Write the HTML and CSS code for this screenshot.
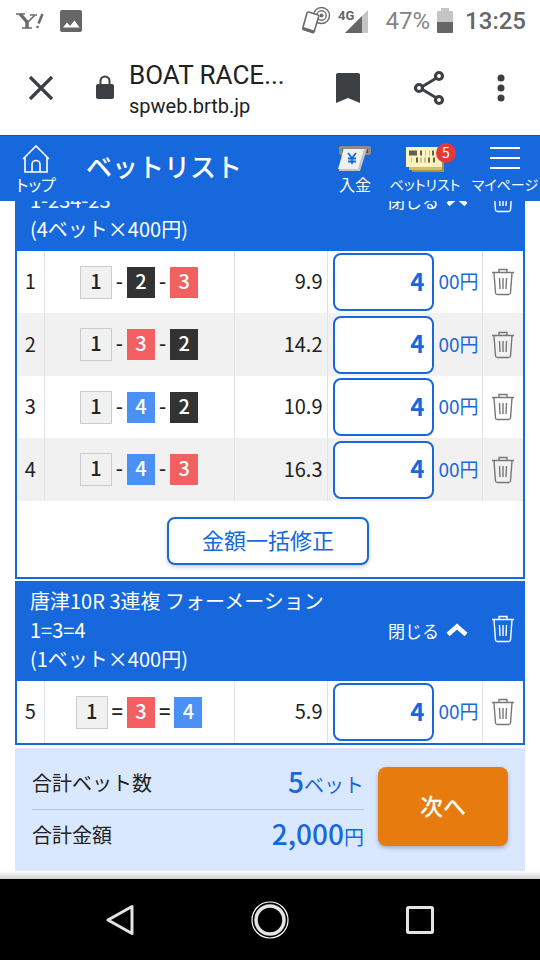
FILE: index.html
```html
<!DOCTYPE html>
<html lang="ja">
<head>
    <meta charset="utf-8">
    <meta name="viewport" content="width=device-width, initial-scale=1">
    <title>ベットリスト</title>
    <link rel="stylesheet" href="styles.css">
</head>
<body>
    <!-- shared icons -->
    <svg class="defs" width="0" height="0">
        <symbol id="trash" viewBox="0 0 24 28">
            <path d="M1 4.500H23M8 4V1.500H16V4M3 5L4.500 25Q4.700 26.500 6.500 26.500H17.500Q19.300 26.500 19.500 25L21 5M8.500 10L9 21M12 10V21M15.500 10L15 21" fill="none" stroke="currentColor" stroke-width="1.400"/>
        </symbol>
        <symbol id="chevron" viewBox="0 0 22 14">
            <path d="M2 11.500l9-8 9 8" fill="none" stroke="currentColor" stroke-width="4.500"/>
        </symbol>
    </svg>

    <div class="status-bar">
        <svg width="30" height="20" viewBox="0 0 30 20" fill="none" stroke="#6b6b6b">
            <path d="M0 3h9M14 4h7M6 17h10" stroke-width="1.500"/>
            <path d="M4 3l7 8v6" stroke-width="3.400"/>
            <path d="M18.500 4.500l-7 7" stroke-width="1.600"/>
            <path d="M26.500 3l-4 9.500" stroke-width="2.600"/>
            <circle cx="21.500" cy="16" r="1.300" fill="#6b6b6b" stroke="none"/>
        </svg>
        <svg class="photo-icon" width="22" height="22" viewBox="0 0 22 22">
            <rect width="22" height="22" rx="2" fill="#666"/>
            <path d="M3 17.500l4-5 3 3.500 4.500-5.500 5 7z" fill="#fff"/>
        </svg>
        <svg class="nfc-icon" width="30" height="30" viewBox="0 0 30 30" fill="none" stroke="#6b6b6b">
            <circle cx="20.500" cy="9.500" r="2" fill="#6b6b6b" stroke="none"/>
            <circle cx="20.500" cy="9.500" r="4.700" stroke-width="1.400"/>
            <circle cx="20.500" cy="9.500" r="8" stroke-width="1.400"/>
            <path d="M7.500 6l9.500 3q1 .4.700 1.500l-4.500 15q-.4 1.200-1.500 1L2.500 23.500q-1-.4-.700-1.500L6 7q.4-1.200 1.500-1z" fill="#fff" stroke-width="1.600"/>
            <path d="M2 22.500l11 3.500" stroke-width="3"/>
        </svg>
        <svg class="signal-icon" width="31" height="26" viewBox="0 0 31 26">
            <path d="M30 2v23H7z" fill="#c4c4c4"/>
            <path d="M24 8v17H7z" fill="#666"/>
            <text x="0" y="12">4G</text>
        </svg>
        <span class="battery">47%</span>
        <svg width="16" height="26" viewBox="0 0 16 26">
            <path d="M4 0h8v3h3q1 0 1 1v10H0V4q0-1 1-1h3z" fill="#c4c4c4"/>
            <path d="M0 14h16v10q0 1-1 1H1q-1 0-1-1z" fill="#666"/>
        </svg>
        <span class="clock">13:25</span>
    </div>

    <div class="browser-bar">
        <button class="icon-button close-tab" aria-label="閉じる">
            <svg width="26" height="26" viewBox="0 0 26 26"><path d="M2 2l22 22M24 2L2 24" stroke="currentColor" stroke-width="3.200"/></svg>
        </button>
        <svg class="lock" width="20" height="26" viewBox="0 0 20 26">
            <rect x="1" y="9" width="18" height="15" rx="2" fill="currentColor"/>
            <path d="M5.500 10V6a4.500 4.500 0 0 1 9 0v4" fill="none" stroke="currentColor" stroke-width="2"/>
        </svg>
        <div class="page-info">
            <div class="page-title">BOAT RACE...</div>
            <div class="page-url">spweb.brtb.jp</div>
        </div>
        <button class="icon-button" aria-label="ブックマーク">
            <svg width="26" height="32" viewBox="0 0 26 32"><path d="M1 31V3q0-2 2-2h20q2 0 2 2v28l-12-5z" fill="currentColor"/></svg>
        </button>
        <button class="icon-button share" aria-label="共有">
            <svg width="32" height="36" viewBox="0 0 32 36" fill="none" stroke="currentColor" stroke-width="3.200">
                <path d="M7 18L26 6.500M7 18l19 11.500" stroke-width="2.800"/>
                <g fill="#fff"><circle cx="6" cy="18" r="3.500"/><circle cx="26" cy="6" r="3.500"/><circle cx="26" cy="30" r="3.500"/></g>
            </svg>
        </button>
        <button class="icon-button" aria-label="メニュー">
            <svg width="8" height="28" viewBox="0 0 8 28" fill="currentColor"><circle cx="4" cy="4" r="3.500"/><circle cx="4" cy="14" r="3.500"/><circle cx="4" cy="24" r="3.500"/></svg>
        </button>
    </div>

    <header class="site-header">
        <a href="#" class="header-link home">
            <svg width="28" height="28" viewBox="0 0 28 28" fill="none" stroke="#fff" stroke-width="1.600">
                <path d="M1 14L14 1l13 13M3 12.500V27h22V12.500M10 27v-7.500a4 4 0 0 1 8 0V27"/>
            </svg>
            <span>トップ</span>
        </a>
        <h1>ベットリスト</h1>
        <a href="#" class="header-link deposit">
            <svg width="34" height="28" viewBox="0 0 34 28">
                <rect x="1" y="1" width="32" height="9" rx="2" fill="#8c8c8c"/>
                <rect x="4" y="4" width="26" height="4" fill="#555"/>
                <path d="M5 4h24l-7 22H1z" fill="#c4c4c4"/>
                <path d="M6 4h20l-6 20H0z" fill="#f0f0f0"/>
                <path d="M10 8l4 5 4-5M14 13v6M10 13.500h8M10 16.500h8" stroke="#1768dc" stroke-width="1.800" fill="none"/>
            </svg>
            <span>入金</span>
        </a>
        <a href="#" class="header-link betlist">
            <span class="ticket">
                <svg width="38" height="26" viewBox="0 0 38 26">
                    <rect x="6" y="6" width="32" height="19" fill="#ad9443"/>
                    <rect x="3" y="3" width="33" height="20" fill="#d5bd68"/>
                    <rect width="36" height="20" fill="#fdf3bd"/>
                    <path d="M3 6h8M14 6h2M26 6h2M10 13h2M22 13h2M27 13h2" stroke="#665f50" stroke-width="5"/>
                    <path d="M19 6h1M23 6h1M5 13h1M14 13h2M18 13h2" stroke="#c9bf91" stroke-width="5"/>
                </svg>
                <span class="badge">5</span>
            </span>
            <span>ベットリスト</span>
        </a>
        <a href="#" class="header-link mypage">
            <svg width="32" height="24" viewBox="0 0 32 24"><path d="M1 2h30M1 12h30M1 22h30" stroke="#fff" stroke-width="2"/></svg>
            <span>マイページ</span>
        </a>
    </header>

    <main>
        <section class="bet-card">
            <div class="bet-head">
                <p>1-234-23<br>(4ベット×400円)</p>
                <button class="toggle">閉じる <svg width="22" height="14"><use href="#chevron"/></svg></button>
                <button class="delete" aria-label="削除"><svg width="24" height="28"><use href="#trash"/></svg></button>
            </div>
            <table>
                <tr>
                    <td class="no">1</td>
                    <td class="combo"><div><b class="boat b1">1</b><i>-</i><b class="boat b2">2</b><i>-</i><b class="boat b3">3</b></div></td>
                    <td class="odds">9.9</td>
                    <td class="amount"><label><input type="text" value="4"><span>00円</span></label></td>
                    <td class="del"><button class="delete" aria-label="削除"><svg width="24" height="28"><use href="#trash"/></svg></button></td>
                </tr>
                <tr>
                    <td class="no">2</td>
                    <td class="combo"><div><b class="boat b1">1</b><i>-</i><b class="boat b3">3</b><i>-</i><b class="boat b2">2</b></div></td>
                    <td class="odds">14.2</td>
                    <td class="amount"><label><input type="text" value="4"><span>00円</span></label></td>
                    <td class="del"><button class="delete" aria-label="削除"><svg width="24" height="28"><use href="#trash"/></svg></button></td>
                </tr>
                <tr>
                    <td class="no">3</td>
                    <td class="combo"><div><b class="boat b1">1</b><i>-</i><b class="boat b4">4</b><i>-</i><b class="boat b2">2</b></div></td>
                    <td class="odds">10.9</td>
                    <td class="amount"><label><input type="text" value="4"><span>00円</span></label></td>
                    <td class="del"><button class="delete" aria-label="削除"><svg width="24" height="28"><use href="#trash"/></svg></button></td>
                </tr>
                <tr>
                    <td class="no">4</td>
                    <td class="combo"><div><b class="boat b1">1</b><i>-</i><b class="boat b4">4</b><i>-</i><b class="boat b3">3</b></div></td>
                    <td class="odds">16.3</td>
                    <td class="amount"><label><input type="text" value="4"><span>00円</span></label></td>
                    <td class="del"><button class="delete" aria-label="削除"><svg width="24" height="28"><use href="#trash"/></svg></button></td>
                </tr>
            </table>
            <div class="bulk">
                <button class="bulk-button">金額一括修正</button>
            </div>
        </section>

        <section class="bet-card">
            <div class="bet-head">
                <p>唐津10R 3連複 フォーメーション<br>1=3=4<br>(1ベット×400円)</p>
                <button class="toggle">閉じる <svg width="22" height="14"><use href="#chevron"/></svg></button>
                <button class="delete" aria-label="削除"><svg width="24" height="28"><use href="#trash"/></svg></button>
            </div>
            <table>
                <tr>
                    <td class="no">5</td>
                    <td class="combo"><div><b class="boat b1">1</b><i>=</i><b class="boat b3">3</b><i>=</i><b class="boat b4">4</b></div></td>
                    <td class="odds">5.9</td>
                    <td class="amount"><label><input type="text" value="4"><span>00円</span></label></td>
                    <td class="del"><button class="delete" aria-label="削除"><svg width="24" height="28"><use href="#trash"/></svg></button></td>
                </tr>
            </table>
        </section>

        <section class="summary">
            <div class="totals">
                <div class="total"><span>合計ベット数</span><span class="value"><strong>5</strong>ベット</span></div>
                <div class="total"><span>合計金額</span><span class="value"><strong>2,000</strong>円</span></div>
            </div>
            <button class="next">次へ</button>
        </section>
    </main>

    <nav class="android-nav">
        <button aria-label="戻る"><svg width="40" height="40" viewBox="0 0 40 40"><path d="M32 6.500v27L8 20z" fill="none" stroke="#e4e4e4" stroke-width="3" stroke-linejoin="round"/></svg></button>
        <button aria-label="ホーム"><svg width="40" height="40" viewBox="0 0 40 40" fill="none" stroke="#e4e4e4"><circle cx="20" cy="20" r="14" stroke-width="3.500"/><circle cx="20" cy="20" r="18" stroke="#fff" stroke-width="1.200"/></svg></button>
        <button aria-label="履歴"><svg width="40" height="40" viewBox="0 0 40 40"><rect x="7.500" y="7.500" width="25" height="25" rx="1" fill="none" stroke="#e4e4e4" stroke-width="3"/></svg></button>
    </nav>
</body>
</html>
```
FILE: styles.css
```css
* {
    box-sizing: border-box;
}
body {
    margin: 0;
    height: 100vh;
    display: flex;
    flex-direction: column;
    background: #fff;
    color: #222;
    font-family: "Noto Sans CJK JP", sans-serif;
    font-size: 20px;
}
button {
    font-family: inherit;
    background: none;
    border: none;
    padding: 0;
    cursor: pointer;
}
svg {
    display: block;
    flex: none;
}
.defs {
    position: absolute;
}

/* phone status bar */
.status-bar {
    display: flex;
    align-items: center;
    height: 42px;
    padding: 0 14px 0 16px;
    font-family: Roboto, sans-serif;
    font-size: 24px;
    font-weight: 500;
    color: #666;
}
.photo-icon {
    margin-left: 14px;
}
.nfc-icon {
    margin-left: auto;
}
.signal-icon {
    margin: 0 17px 0 7px;
    font-size: 13px;
    font-weight: 700;
    fill: #666;
}
.battery {
    color: #858585;
    font-weight: 400;
    margin-right: 7px;
}
.clock {
    margin-left: 12px;
}

/* browser bar */
.browser-bar {
    display: flex;
    align-items: center;
    height: 93px;
    padding: 0 35px 2px 28px;
    color: #3c4043;
    font-family: Roboto, sans-serif;
}
.icon-button {
    color: #3c4043;
}
.lock {
    margin-left: 41px;
}
.page-info {
    flex: 1;
    margin-left: 14px;
    padding-top: 4px;
    color: #202124;
}
.page-title {
    font-size: 26px;
    line-height: 32px;
}
.page-url {
    font-size: 20px;
    line-height: 30px;
}
.share {
    margin: 0 52px;
}

/* site header */
.site-header {
    display: flex;
    flex: none;
    height: 66px;
    background: #1768dc;
    border-top: 1px solid #1a4f9e;
    color: #fff;
}
.site-header h1 {
    flex: 1;
    margin: 0;
    padding-left: 14px;
    font-size: 26px;
    font-weight: 500;
    line-height: 60px;
}
.header-link {
    display: flex;
    flex-direction: column;
    align-items: center;
    justify-content: flex-end;
    padding-bottom: 6px;
    color: #fff;
    font-size: 16px;
    line-height: 22px;
    text-decoration: none;
    white-space: nowrap;
    font-feature-settings: "palt";
}
.home {
    width: 72px;
}
.deposit {
    width: 50px;
}
.betlist {
    width: 90px;
    font-size: 14px;
}
.mypage {
    width: 70px;
    font-size: 14px;
}
.mypage svg {
    margin-bottom: 3px;
}
.ticket {
    position: relative;
}
.badge {
    position: absolute;
    top: -4px;
    right: -12px;
    width: 20px;
    height: 20px;
    border-radius: 50%;
    background: #e5383b;
    font-size: 14px;
    line-height: 19px;
    text-align: center;
}

/* bet list, kept at the end of its scroll */
main {
    flex: 1;
    min-height: 0;
    overflow: hidden;
    display: flex;
    flex-direction: column;
    justify-content: flex-end;
    padding: 0 15px 8px;
    background: linear-gradient(to top, #d0d0d0, #fff 8px);
}
.bet-card {
    flex: none;
    margin-bottom: 2px;
    border: 2px solid #1768dc;
    background: #fff;
}
.bet-head {
    display: flex;
    align-items: center;
    min-height: 98px;
    padding-right: 8px;
    background: #1768dc;
    color: #fff;
}
.bet-head p {
    flex: 1;
    align-self: flex-end;
    margin: 0;
    padding: 3px 0 8px 13px;
    line-height: 29px;
    white-space: nowrap;
}
.toggle {
    display: flex;
    align-items: center;
    gap: 7px;
    padding-bottom: 4px;
    color: #fff;
    font-size: 17px;
}
.delete {
    display: block;
    color: #777;
}
.bet-head .delete {
    margin-left: 23px;
    padding-bottom: 6px;
    color: #fff;
}
table {
    width: 100%;
    table-layout: fixed;
    border-collapse: collapse;
}
tr {
    height: 62px;
}
tr:nth-child(even) {
    height: 63px;
    background: #f1f1f1;
}
td {
    padding: 0;
    border-right: 1px solid #e2e2e2;
}
td:last-child {
    border-right: none;
}
.no {
    width: 27px;
    padding-bottom: 3px;
    text-align: center;
}
.combo div {
    display: flex;
    align-items: center;
    justify-content: center;
}
.combo i {
    padding: 0 4px 4px;
    font-style: normal;
    font-weight: 500;
}
.boat {
    width: 28px;
    height: 31px;
    color: #fff;
    font-weight: 500;
    line-height: 28px;
    text-align: center;
}
.b1 {
    width: 32px;
    height: 33px;
    background: #f1f1f1;
    border: 1px solid #ccc;
    color: #222;
}
.b2 {
    background: #333;
}
.b3 {
    background: #f26062;
}
.b4 {
    background: #4a90f5;
}
.odds {
    width: 93px;
    padding: 0 4px 3px 0;
    text-align: right;
}
.amount {
    width: 155px;
    padding-left: 5px;
    color: #1768dc;
}
.amount label {
    display: flex;
    align-items: center;
    gap: 5px;
    font-size: 19px;
}
.amount span {
    padding-bottom: 3px;
}
.amount input {
    width: 101px;
    height: 58px;
    padding: 0 7px 4px;
    border: 2px solid #1768dc;
    border-radius: 8px;
    background: #fff;
    color: #1768dc;
    font-family: inherit;
    font-size: 24px;
    font-weight: 700;
    text-align: right;
}
.del {
    width: 41px;
}
.del .delete {
    margin: 0 auto;
}
.bulk {
    display: flex;
    justify-content: center;
    padding: 16px 4px 12px 0;
}
.bulk-button {
    width: 202px;
    height: 48px;
    padding-bottom: 4px;
    border: 2px solid #1768dc;
    border-radius: 8px;
    background: #fff;
    box-shadow: 0 2px 4px #0003;
    color: #1768dc;
    font-size: 22px;
}

/* totals */
.summary {
    display: flex;
    flex: none;
    align-items: flex-start;
    gap: 14px;
    height: 123px;
    margin-top: 1px;
    padding: 8px 17px;
    background: #d9e8ff;
}
.totals {
    flex: 1;
}
.total {
    display: flex;
    align-items: center;
    justify-content: space-between;
    height: 53px;
}
.total + .total {
    height: 50px;
    border-top: 1px solid #a9c6f3;
}
.value {
    padding-bottom: 4px;
    color: #1768dc;
}
.value strong {
    font-size: 28px;
    font-weight: 500;
    line-height: 40px;
}
.next {
    width: 130px;
    height: 79px;
    margin-top: 11px;
    padding-bottom: 4px;
    border-radius: 8px;
    background: #e87b0e;
    box-shadow: 0 2px 4px #0004;
    color: #fff;
    font-size: 23px;
    font-weight: 500;
}

/* phone navigation */
.android-nav {
    display: flex;
    flex: none;
    align-items: center;
    justify-content: center;
    gap: 110px;
    height: 81px;
    background: #000;
}
```
